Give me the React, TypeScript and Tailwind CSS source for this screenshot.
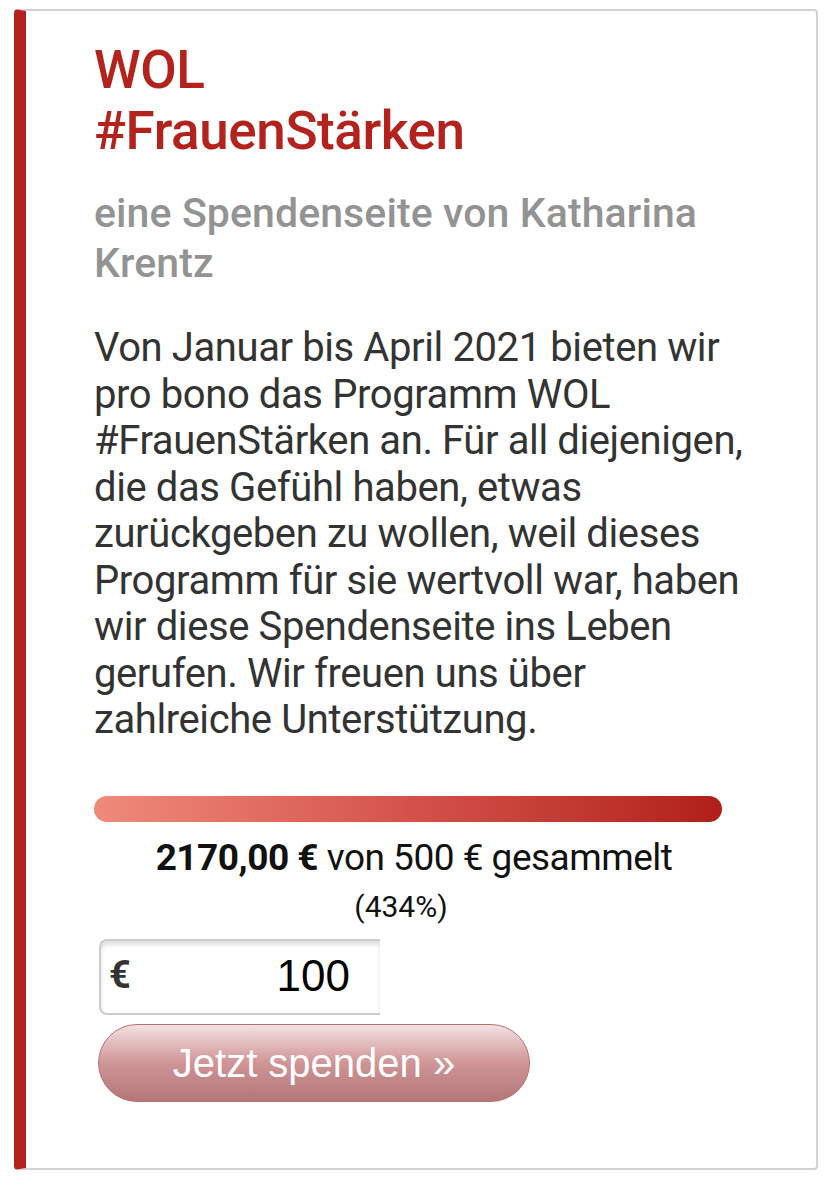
import React from "react";

export default function App() {
  return (
    <div className="min-h-[1200px] bg-white pt-[9px] pl-[14px] pr-[10px]">
      <div
        className="h-[1161px] rounded-[4px] border-2 border-l-[12px] border-[#d2d2d2] border-l-[#b3221c] pt-[29px] pl-[68px]"
        style={{ fontFamily: "Roboto, 'Noto Sans', sans-serif" }}
      >
        <h1 className="text-[53px] leading-[61px] font-medium text-[#b3221c] tracking-[-0.4px]">
          WOL
          <br />
          #FrauenStärken
        </h1>
        <h2 className="mt-[26px] text-[41px] leading-[50px] font-medium text-[#939393] w-[640px] tracking-[0.1px]">
          eine Spendenseite von Katharina Krentz
        </h2>
        <p className="mt-[37px] w-[650px] text-[40px] leading-[46.5px] text-[#333333] tracking-[-0.4px]">
          Von Januar bis April 2021 bieten wir pro bono das Programm WOL #FrauenStärken an. Für all diejenigen, die
          das Gefühl haben, etwas zurückgeben zu wollen, weil dieses Programm für sie wertvoll war, haben wir diese
          Spendenseite ins Leben gerufen. Wir freuen uns über zahlreiche Unterstützung.
        </p>
        <div className="mt-[52px] h-[26px] w-[628px] rounded-full bg-gradient-to-r from-[#ef8a7b] via-[#d4524a] to-[#b01e18]" />
        <div className="mt-[16px] w-[640px] text-center text-[37px] leading-[40px] text-[#111111] tracking-[-0.5px]">
          <span className="font-bold">2170,00 €</span> von 500 € gesammelt
        </div>
        <div className="mt-[11px] w-[614px] text-center text-[30px] leading-[36px] text-[#111111]">(434%)</div>
        <div className="mt-[14px] ml-[5px] flex h-[76px] w-[281px] items-start rounded-l-[8px] border-2 border-r-0 border-[#cccccc] bg-white shadow-[inset_0_4px_4px_rgba(0,0,0,0.12)]">
          <span className="mt-[12px] ml-[8px] text-[38px] leading-[44px] font-bold text-[#333333]">€</span>
          <span
            className="ml-auto mr-[30px] mt-[10px] text-[44px] leading-[50px] text-black"
            style={{ fontFamily: "'Liberation Sans', Arial, sans-serif" }}
          >
            100
          </span>
        </div>
        <button
          className="mt-[9px] ml-[4px] flex h-[78px] w-[432px] items-center justify-center rounded-full border border-[#b86f72] bg-gradient-to-b from-[#f3e1e2] via-[#cf9496] to-[#b3777a] text-[40px] text-white"
          style={{ fontFamily: "'Liberation Sans', Arial, sans-serif" }}
        >
          Jetzt spenden »
        </button>
      </div>
    </div>
  );
}
